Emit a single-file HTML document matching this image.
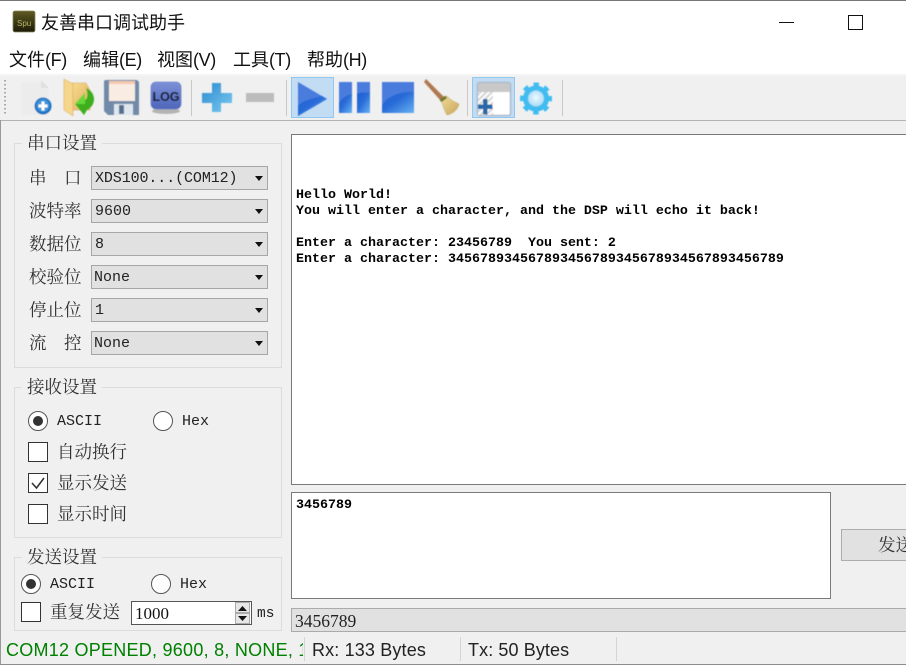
<!DOCTYPE html>
<html><head><meta charset="utf-8">
<style>
html,body{margin:0;padding:0;width:906px;height:665px;overflow:hidden;background:#f0f0f0}
#w{position:relative;width:906px;height:665px;overflow:hidden;background:#f0f0f0;font-family:"Noto Serif CJK SC","Liberation Serif",serif;color:#222}
#w div,#w span.a,#w svg{position:absolute}
.t{white-space:pre;line-height:24px;height:24px}
.cj{font-family:"Liberation Sans","Noto Sans CJK SC",sans-serif;font-size:18px;color:#111}
.cj span{letter-spacing:-.4px}
.lb{font-family:"Noto Serif CJK SC",serif;font-size:17.5px;color:#333;font-weight:400}
.m{font-family:"Liberation Mono","Noto Serif CJK SC",monospace;font-size:15px;color:#222}
.gb{border:1px solid #dcdcdc;box-sizing:border-box}
.gt{background:#f0f0f0;padding:0 5px;font-family:"Noto Serif CJK SC",serif;font-size:17.5px;color:#333;line-height:24px;white-space:pre}
.cb{left:91px;width:177px;height:24px;box-sizing:border-box;border:1px solid #a6a6a6;background:#e1e1e1}
.cb:after{content:"";position:absolute;right:4px;top:9px;border:4px solid transparent;border-top:5px solid #111;border-bottom:0}
.r{width:20px;height:20px;box-sizing:border-box;border:1px solid #555;border-radius:50%;background:#fff}
.r.on:after{content:"";position:absolute;left:4px;top:4px;width:10px;height:10px;border-radius:50%;background:#333}
.c{width:20px;height:20px;box-sizing:border-box;border:1px solid #333;background:#fff}
.sep{width:1px;background:#c8c8c8;top:80px;height:36px}
.term{font-family:"Liberation Mono",monospace;font-weight:700;font-size:13.33px;line-height:16px;color:#000;white-space:pre}
.st{font-family:"Liberation Sans",sans-serif;font-size:18px;line-height:24px;white-space:pre}
.ss{width:1px;background:#d4d4d4;top:637px;height:24px}
</style></head><body><div id="w">
<div style="left:0;top:0;width:906px;height:75px;background:#fff"></div>
<div style="left:0;top:0;width:906px;height:1px;background:#777"></div>
<div style="left:0;top:74px;width:906px;height:2px;background:#f4f4f4"></div>
<svg style="left:12px;top:10px" width="24" height="24" viewBox="0 0 24 24"><defs><linearGradient id="sp" x1="0" y1="0" x2="0" y2="1"><stop offset="0" stop-color="#5f5a22"/><stop offset="1" stop-color="#1b1a08"/></linearGradient></defs><rect x="1" y="1" width="22" height="21" rx="2" fill="url(#sp)" stroke="#8a8660" stroke-width=".8"/><text x="5" y="16" font-family="Liberation Sans,sans-serif" font-size="8" fill="#b9b46a">Spu</text></svg>
<div class="t cj" style="left:41px;top:11px">友善串口调试助手</div>
<div style="left:779px;top:22px;width:15px;height:1px;background:#111"></div>
<div style="left:848px;top:15px;width:15px;height:15px;box-sizing:border-box;border:1px solid #111"></div>
<div class="t cj" style="left:9px;top:48px">文件<span>(F)</span></div>
<div class="t cj" style="left:83px;top:48px">编辑<span>(E)</span></div>
<div class="t cj" style="left:157px;top:48px">视图<span>(V)</span></div>
<div class="t cj" style="left:233px;top:48px">工具<span>(T)</span></div>
<div class="t cj" style="left:307px;top:48px">帮助<span>(H)</span></div>

<div style="left:0;top:120px;width:906px;height:1px;background:#b4b4b4"></div>
<div style="left:0;top:120px;width:1px;height:545px;background:#999"></div>
<svg style="left:4px;top:80px" width="4" height="36"><g fill="#a8a8a8"><rect x="0" y="0" width="2" height="1.5"/><rect x="0" y="4" width="2" height="1.5"/><rect x="0" y="8" width="2" height="1.5"/><rect x="0" y="12" width="2" height="1.5"/><rect x="0" y="16" width="2" height="1.5"/><rect x="0" y="20" width="2" height="1.5"/><rect x="0" y="24" width="2" height="1.5"/><rect x="0" y="28" width="2" height="1.5"/><rect x="0" y="32" width="2" height="1.5"/></g></svg>

<svg style="left:0;top:75px" width="600" height="46" viewBox="0 75 600 46">
<defs>
<linearGradient id="bl" x1="0" y1="0" x2="1" y2="1"><stop offset="0" stop-color="#1c5cd0"/><stop offset=".45" stop-color="#2a6cd8"/><stop offset="1" stop-color="#68b2f2"/></linearGradient>
<linearGradient id="pl" x1="0" y1="0" x2="1" y2="1"><stop offset="0" stop-color="#2a8ad0"/><stop offset="1" stop-color="#7ccaf0"/></linearGradient>
<linearGradient id="fd" x1="0" y1="0" x2="1" y2="1"><stop offset="0" stop-color="#f8dc90"/><stop offset="1" stop-color="#dcae5e"/></linearGradient>
<radialGradient id="gr" cx=".5" cy=".45" r=".6"><stop offset="0" stop-color="#eefaff"/><stop offset="1" stop-color="#a4d8f6"/></radialGradient>
<linearGradient id="lg" x1="0" y1="0" x2="0" y2="1"><stop offset="0" stop-color="#7d90d8"/><stop offset="1" stop-color="#4e66ba"/></linearGradient>
<linearGradient id="bm" x1="0" y1="0" x2="1" y2="1"><stop offset="0" stop-color="#f0dc9a"/><stop offset="1" stop-color="#c8a458"/></linearGradient>
<pattern id="ht" width="4" height="4" patternUnits="userSpaceOnUse" patternTransform="rotate(45)"><rect width="4" height="4" fill="#fff"/><rect width="2" height="4" fill="#d4d4d4"/></pattern>
<filter id="sb" x="-5%" y="-5%" width="110%" height="110%"><feGaussianBlur stdDeviation=".4"/></filter>
</defs>
<rect x="291.500" y="77.500" width="42" height="40" fill="#c1dcf3" stroke="#90c8f0"/>
<rect x="472.500" y="77.500" width="42" height="40" fill="#c1dcf3" stroke="#90c8f0"/>
<g filter="url(#sb)">
<path d="M21 82H42L49 89V115H21Z" fill="#ececec"/><path d="M41 80L49 88H41Z" fill="#e0e0e0"/>
<circle cx="43" cy="106" r="8.500" fill="#1d70c0"/><circle cx="43" cy="105.500" r="6.500" fill="#3a94dc"/><path d="M38.500 104.500H41.500V101.500H44.500V104.500H47.500V107.500H44.500V110.500H41.500V107.500H38.500Z" fill="#fff"/>

<path d="M72 83H86L90 90V110H72Z" fill="url(#fd)" stroke="#cfa55c" stroke-width=".5"/>
<path d="M64 79L73 84V116L64 110Z" fill="#f6d68a" stroke="#d0a050" stroke-width=".5"/>
<path d="M86 88C96 92 97 105 87 110L84 115L75 104L85 93L85 100C88 99 88 93 86 88Z" fill="#3cae1c"/>
<path d="M75 104L85 93V104Z" fill="#66d838"/>

<path d="M105 80H136A3 3 0 0 1 139 83V115H108L104 111V81Z" fill="#6f8aa8"/>
<rect x="109" y="81" width="26" height="20" fill="#f9ece2"/><rect x="109" y="81" width="26" height="3" fill="#f6c8b0"/>
<rect x="114" y="104" width="19" height="11" fill="#dfe6ee"/><rect x="119" y="105" width="5" height="9" fill="#55708e"/>

<ellipse cx="166" cy="111" rx="14" ry="3" fill="#b4b4b4"/>
<rect x="151" y="82" width="30" height="27" rx="5" fill="url(#lg)" stroke="#5a72c0" stroke-width=".6"/>
<text x="166" y="101" font-family="Liberation Sans,sans-serif" font-weight="700" font-size="12.500" fill="#0a0a14" text-anchor="middle">LOG</text>

<path d="M212 83H221V93H232V103H221V112H212V103H202V93H212Z" fill="url(#pl)"/>
<rect x="246" y="93" width="28" height="9" fill="#bcbcbc"/>

<path d="M298 82L327 99L298 116Z" fill="#4a7cdc"/>
<path d="M298 116V106C303 100 312 99 322 96L327 99Z" fill="url(#bl)"/>

<rect x="339" y="82" width="13" height="31" fill="#4a7cdc"/><path d="M339 113V103C342 98 347 95 352 94V113Z" fill="url(#bl)"/>
<rect x="357" y="82" width="13" height="31" fill="#4a7cdc"/><path d="M357 94C361 92 366 92 370 93V113H357Z" fill="url(#bl)"/>
<rect x="382" y="82" width="32" height="31" fill="#4a7cdc"/>
<path d="M382 113V106C386 96 402 91 414 92V113Z" fill="url(#bl)"/>

<path d="M424 82L426 79L445 98L441 101Z" fill="#b07850"/>
<path d="M441 100L447 96C450 100 455 102 459 104C458 110 452 114 447 115C444 110 443 105 441 100Z" fill="url(#bm)" stroke="#bfa060" stroke-width=".5"/>
<rect x="440" y="97" width="7" height="3" fill="#6f7a30" transform="rotate(-35 444 99)"/>

<rect x="477.500" y="82.500" width="33" height="33" rx="2" fill="#fff" stroke="#a8b8cc" stroke-width="1.500"/>
<rect x="478" y="83" width="32" height="9" fill="#c8c8c8"/>
<rect x="478" y="92" width="15" height="23" fill="url(#ht)"/>
<path d="M483 99H487.500V104.500H492.500V109H487.500V114.500H483V109H478V104.500H483Z" fill="#2868a8"/>

<circle cx="536" cy="98.500" r="10" fill="none" stroke="#40bcf0" stroke-width="6"/>
<circle cx="536" cy="98.500" r="13.500" fill="none" stroke="#40bcf0" stroke-width="5" stroke-dasharray="5.300 5.300" stroke-dashoffset="2.650"/>
<circle cx="536" cy="98.500" r="8" fill="url(#gr)"/>
</g>
</svg>
<div class="sep" style="left:191px"></div>
<div class="sep" style="left:286px"></div>
<div class="sep" style="left:467px"></div>
<div class="sep" style="left:562px"></div>

<!-- group 1 -->
<div class="gb" style="left:14px;top:143px;width:268px;height:225px"></div>
<div class="gt" style="left:22px;top:131px">串口设置</div>
<div class="t lb" style="left:29px;top:166px">串</div><div class="t lb" style="left:64px;top:166px">口</div>
<div class="t lb" style="left:29px;top:199px">波特率</div>
<div class="t lb" style="left:29px;top:232px">数据位</div>
<div class="t lb" style="left:29px;top:265px">校验位</div>
<div class="t lb" style="left:29px;top:298px">停止位</div>
<div class="t lb" style="left:29px;top:331px">流</div><div class="t lb" style="left:64px;top:331px">控</div>
<div class="cb" style="top:166px"></div><div class="cb" style="top:199px"></div><div class="cb" style="top:232px"></div><div class="cb" style="top:265px"></div><div class="cb" style="top:298px"></div><div class="cb" style="top:331px"></div>
<div class="t m" style="left:95px;top:167px;letter-spacing:-.1px">XDS100...(COM12)</div>
<div class="t m" style="left:95px;top:200px">9600</div>
<div class="t m" style="left:95px;top:233px">8</div>
<div class="t m" style="left:94px;top:266px">None</div>
<div class="t m" style="left:95px;top:299px">1</div>
<div class="t m" style="left:94px;top:332px">None</div>

<!-- group 2 -->
<div class="gb" style="left:14px;top:387px;width:268px;height:151px"></div>
<div class="gt" style="left:22px;top:375px">接收设置</div>
<div class="r on" style="left:28px;top:411px"></div>
<div class="t m" style="left:57px;top:410px">ASCII</div>
<div class="r" style="left:153px;top:411px"></div>
<div class="t m" style="left:182px;top:410px">Hex</div>
<div class="c" style="left:28px;top:442px"></div><div class="t lb" style="left:57px;top:440px">自动换行</div>
<div class="c" style="left:28px;top:473px"></div><div class="t lb" style="left:57px;top:471px">显示发送</div>
<svg style="left:28px;top:473px" width="20" height="20"><path d="M4 10L8.500 15L16 5" fill="none" stroke="#333" stroke-width="1.600"/></svg>
<div class="c" style="left:28px;top:504px"></div><div class="t lb" style="left:57px;top:502px">显示时间</div>

<!-- group 3 -->
<div class="gb" style="left:14px;top:557px;width:268px;height:74px"></div>
<div class="gt" style="left:22px;top:545px">发送设置</div>
<div class="r on" style="left:21px;top:574px"></div>
<div class="t m" style="left:50px;top:573px">ASCII</div>
<div class="r" style="left:151px;top:574px"></div>
<div class="t m" style="left:180px;top:573px">Hex</div>
<div class="c" style="left:21px;top:602px"></div><div class="t lb" style="left:50px;top:600px">重复发送</div>
<div style="left:131px;top:601px;width:121px;height:24px;box-sizing:border-box;border:1px solid #555;background:#fff"></div>
<div class="t" style="left:135px;top:602px;font-family:'Liberation Serif',serif;font-size:17px;color:#111">1000</div>
<div style="left:235px;top:602px;width:15px;height:11px;box-sizing:border-box;border:1px solid #aaa;background:#e6e6e6"></div>
<div style="left:235px;top:613px;width:15px;height:11px;box-sizing:border-box;border:1px solid #aaa;background:#e6e6e6"></div>
<svg style="left:235px;top:602px" width="15" height="22"><path d="M3 9L7.500 4L12 9Z M3 14H12L7.500 19Z" fill="#111"/></svg>
<div class="t m" style="left:257px;top:602px;font-size:14.500px">ms</div>

<!-- terminal -->
<div style="left:291px;top:134px;width:640px;height:351px;box-sizing:border-box;border:1px solid #7a7a7a;background:#fff"></div>
<div class="term" style="left:296px;top:188px">Hello World!
You will enter a character, and the DSP will echo it back!

Enter a character: 23456789  You sent: 2
Enter a character: 345678934567893456789345678934567893456789</div>
<div style="left:291px;top:492px;width:540px;height:107px;box-sizing:border-box;border:1px solid #7a7a7a;background:#fff"></div>
<div class="term" style="left:296px;top:498px">3456789</div>
<div style="left:841px;top:529px;width:90px;height:32px;box-sizing:border-box;border:1px solid #adadad;background:#e1e1e1"></div>
<div class="t lb" style="left:878px;top:533px">发送</div>
<div style="left:291px;top:608px;width:640px;height:24px;box-sizing:border-box;border:1px solid #ababab;background:#e1e1e1"></div>
<div class="t" style="left:295px;top:609px;font-family:'Liberation Serif',serif;font-size:17.5px;color:#222">3456789</div>

<!-- status -->
<div style="left:0;top:664px;width:906px;height:1px;background:#8c8c8c"></div>
<div style="left:0;top:637px;width:303px;height:26px;overflow:hidden"><div class="st" style="left:6px;top:1px;color:#008000;letter-spacing:.25px">COM12 OPENED, 9600, 8, NONE, 1</div></div>
<div class="ss" style="left:304px"></div>
<div class="st" style="left:312px;top:638px;color:#222;letter-spacing:.15px">Rx: 133 Bytes</div>
<div class="ss" style="left:460px"></div>
<div class="st" style="left:468px;top:638px;color:#222;letter-spacing:.1px">Tx: 50 Bytes</div>
<div class="ss" style="left:616px"></div>
</div></body></html>
